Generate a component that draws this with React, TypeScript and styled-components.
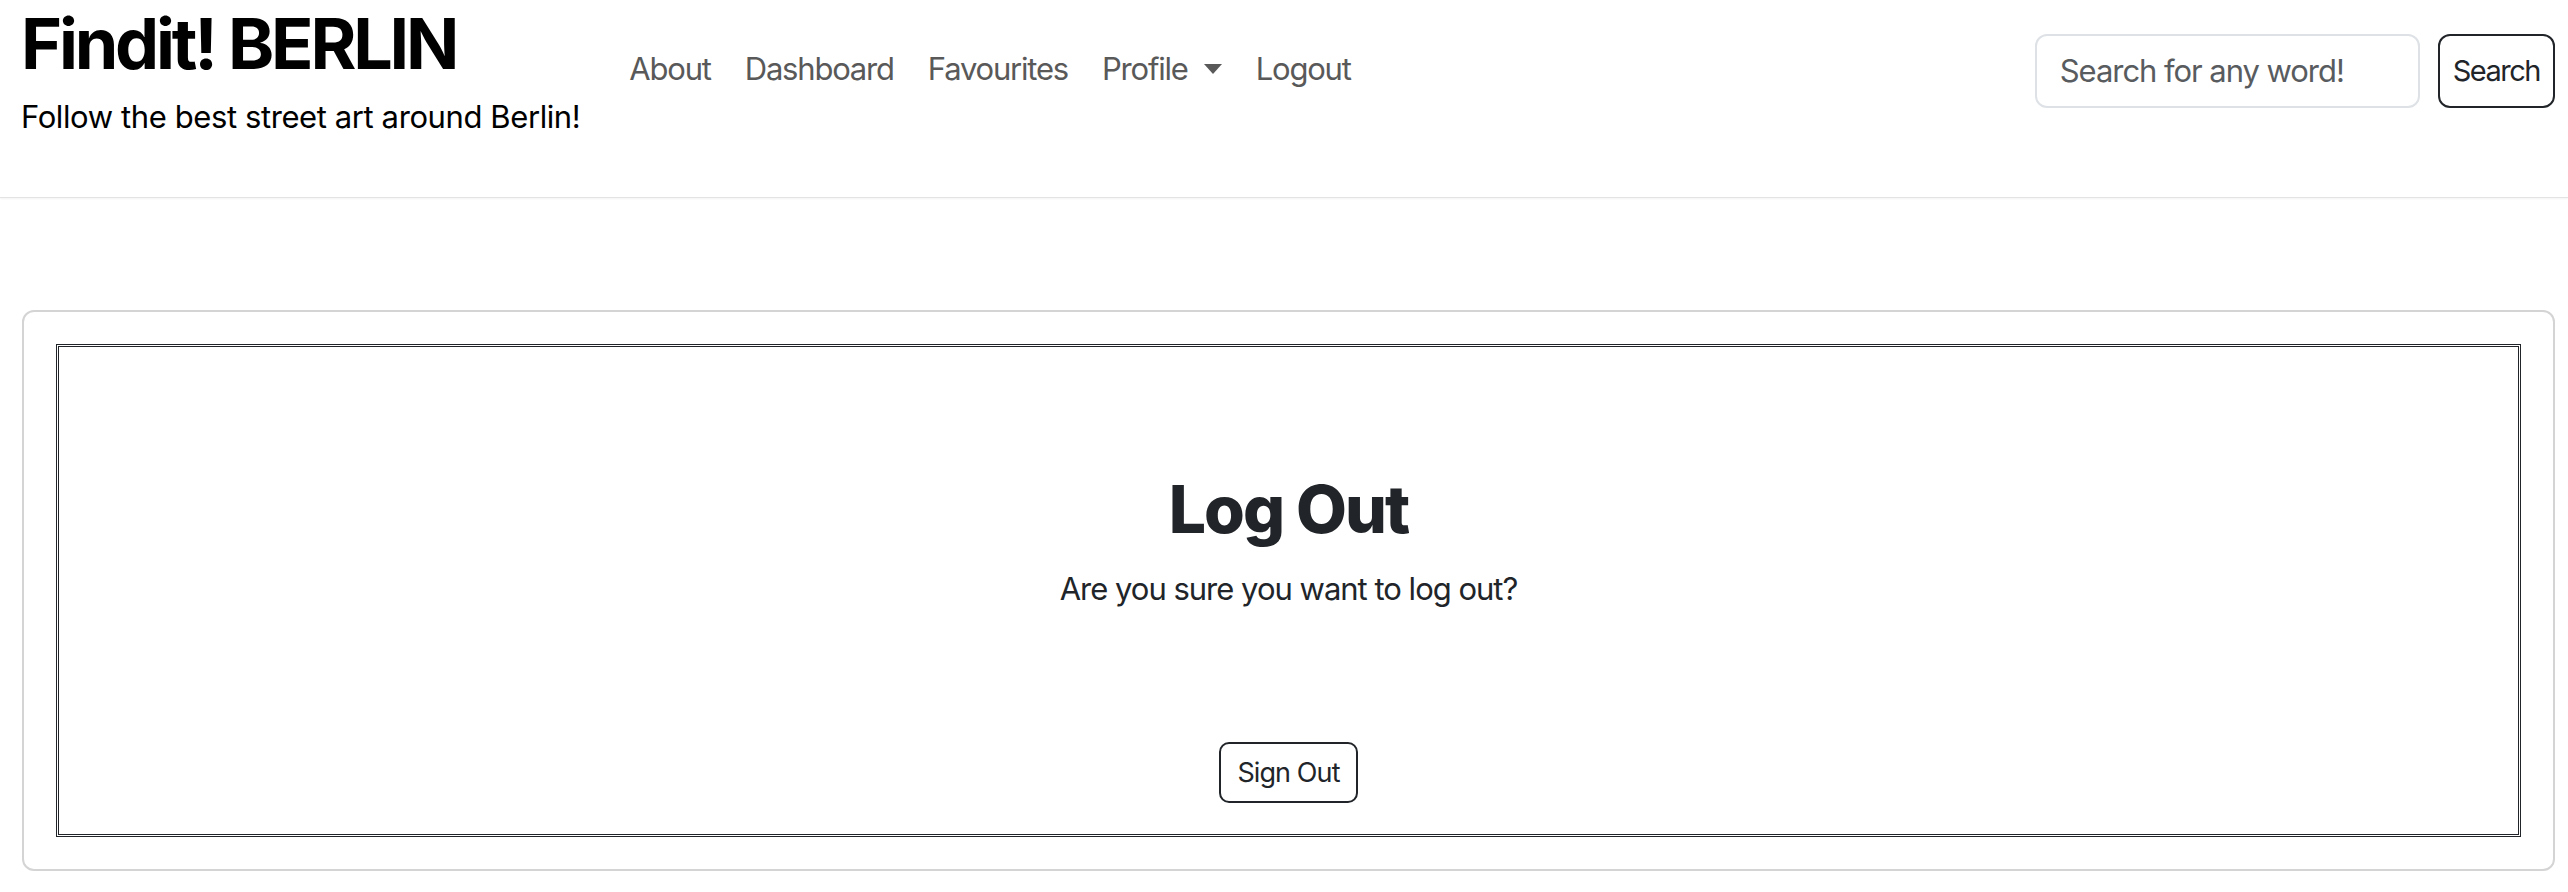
import React from "react";
import styled, { createGlobalStyle } from "styled-components";

const GlobalStyle = createGlobalStyle`
  html, body {
    margin: 0;
    padding: 0;
    background: #ffffff;
    font-family: Inter, "Noto Sans", "Liberation Sans", sans-serif;
    color: #212529;
  }
  * { box-sizing: border-box; }
`;

const Header = styled.header`
  display: flex;
  align-items: center;
  height: 198px;
  padding: 5px 13px 61px 21px;
  border-bottom: 1px solid #e3e3e3;
  box-shadow: 0 1px 2px rgba(0, 0, 0, 0.05);
`;

const Brand = styled.div`
  display: flex;
  flex-direction: column;
  margin-right: 32px;
`;

const Title = styled.h1`
  margin: 0;
  font-size: 70px;
  font-weight: 700;
  line-height: 84px;
  color: #000;
  letter-spacing: -3.2px;
`;

const Tagline = styled.p`
  margin: 8px 0 0;
  font-size: 31px;
  line-height: 46px;
  color: #000;
  letter-spacing: -0.4px;
`;

const Nav = styled.nav`
  display: flex;
  align-items: center;
  flex: 1;
  padding-bottom: 3px;
`;

const NavLink = styled.a`
  display: inline-flex;
  align-items: center;
  padding: 8px 17px;
  font-size: 31px;
  line-height: 48px;
  color: #595959;
  text-decoration: none;
  letter-spacing: -1.2px;
`;

const Caret = styled.span`
  display: inline-block;
  margin-left: 16px;
  width: 0;
  height: 0;
  border-top: 10px solid #595959;
  border-left: 9px solid transparent;
  border-right: 9px solid transparent;
`;

const SearchForm = styled.form`
  display: flex;
  align-items: center;
  gap: 18px;
`;

const SearchInput = styled.input`
  width: 385px;
  height: 74px;
  padding: 0 23px;
  border: 2px solid #dee2e6;
  border-radius: 12px;
  font-family: inherit;
  font-size: 31px;
  color: #212529;
  outline: none;
  letter-spacing: -1.05px;
  &::placeholder {
    color: #595c5f;
  }
`;

const OutlineButton = styled.button<{ $size: "lg" | "md" }>`
  height: ${(p) => (p.$size === "lg" ? "74px" : "61px")};
  padding: ${(p) => (p.$size === "lg" ? "0 13px" : "0 16px")};
  background: #fff;
  border: 2px solid #212529;
  border-radius: ${(p) => (p.$size === "lg" ? "12px" : "10px")};
  font-family: inherit;
  font-size: ${(p) => (p.$size === "lg" ? "29px" : "27px")};
  color: #212529;
  letter-spacing: ${(p) => (p.$size === "lg" ? "-1.5px" : "-0.9px")};
  cursor: pointer;
`;

const Main = styled.main`
  padding: 112px 13px 0 22px;
`;

const Card = styled.section`
  border: 2px solid #d4d4d4;
  border-radius: 12px;
  padding: 32px;
`;

const Frame = styled.div`
  border: 3px double #212529;
  padding: 123px 32px 31px;
  display: flex;
  flex-direction: column;
  align-items: center;
  text-align: center;
`;

const Heading = styled.h2`
  margin: 0 0 17px;
  font-size: 66px;
  line-height: 79px;
  font-weight: 800;
  color: #212529;
  letter-spacing: -1.9px;
`;

const Question = styled.p`
  margin: 0 0 131px;
  font-size: 31px;
  line-height: 45px;
  color: #212529;
  letter-spacing: -1px;
`;

export default function App() {
  return (
    <>
      <GlobalStyle />
      <Header>
        <Brand>
          <Title>Findit! BERLIN</Title>
          <Tagline>Follow the best street art around Berlin!</Tagline>
        </Brand>
        <Nav>
          <NavLink href="#">About</NavLink>
          <NavLink href="#">Dashboard</NavLink>
          <NavLink href="#">Favourites</NavLink>
          <NavLink href="#">
            Profile
            <Caret />
          </NavLink>
          <NavLink href="#">Logout</NavLink>
        </Nav>
        <SearchForm onSubmit={(e) => e.preventDefault()}>
          <SearchInput placeholder="Search for any word!" />
          <OutlineButton $size="lg" type="submit">
            Search
          </OutlineButton>
        </SearchForm>
      </Header>
      <Main>
        <Card>
          <Frame>
            <Heading>Log Out</Heading>
            <Question>Are you sure you want to log out?</Question>
            <OutlineButton $size="md" type="button">
              Sign Out
            </OutlineButton>
          </Frame>
        </Card>
      </Main>
    </>
  );
}
